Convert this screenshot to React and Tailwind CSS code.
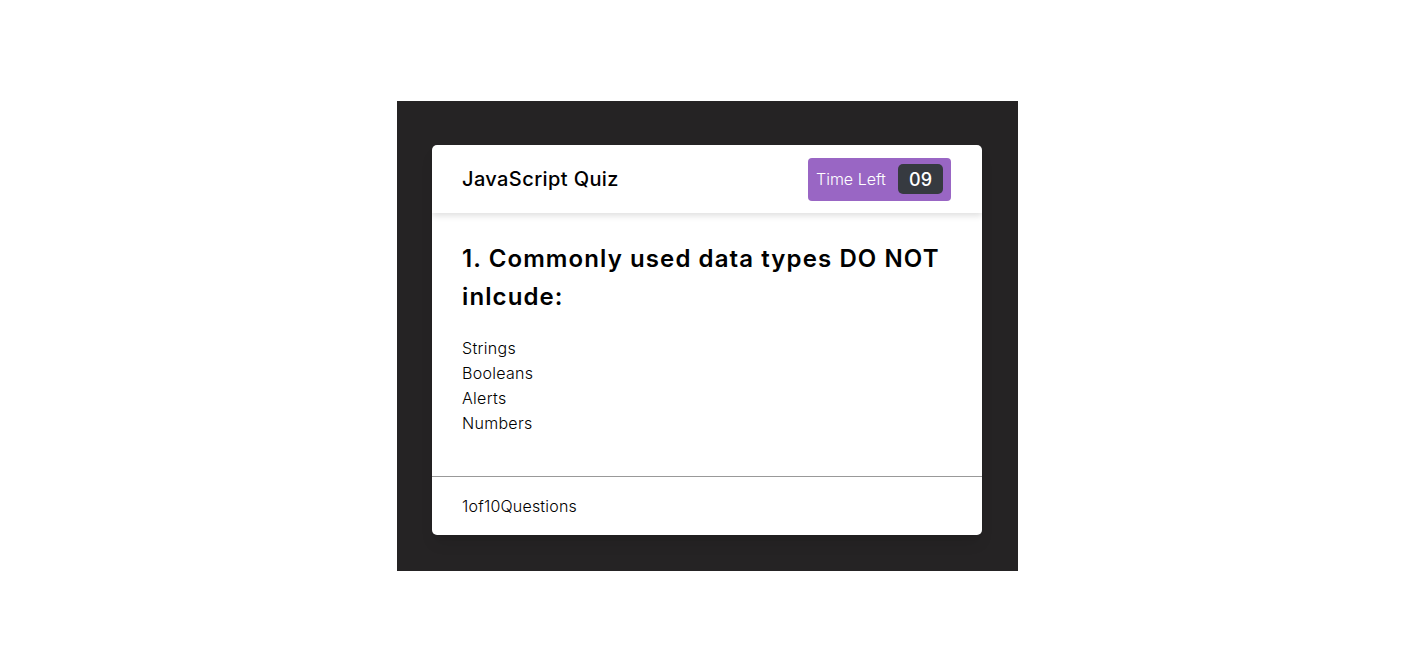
import React from "react";

const options = ["Strings", "Booleans", "Alerts", "Numbers"];

export default function App() {
  return (
    <div
      className="min-h-screen bg-white flex justify-center pt-[101px] pr-[1px]"
      style={{ fontFamily: "Inter, 'Noto Sans', sans-serif" }}
    >
      <div className="w-[621px] h-[470px] bg-[#252324] pt-[44px] px-[35px]">
        {/* Quiz card */}
        <div className="w-[550px] bg-white rounded-[5px] shadow-lg overflow-hidden">
          <header className="h-[68px] pl-[30px] pr-[31px] flex items-center justify-between shadow-[0_3px_6px_rgba(0,0,0,0.12)] relative">
            <h1 className="text-[20px] font-medium tracking-[0.4px] text-black">JavaScript Quiz</h1>
            <div className="h-[43px] w-[143px] bg-[#9966c4] rounded-[4px] flex items-center justify-between pl-[8px] pr-[8px]">
              <span className="text-white text-[16px] font-light">Time Left</span>
              <span className="h-[30px] w-[45px] bg-[#363a40] rounded-[5px] text-white text-[18px] font-medium flex items-center justify-center">
                09
              </span>
            </div>
          </header>

          <section className="px-[30px] pt-[27px] pb-[40px] border-b border-[#999]">
            <h2 className="text-[24px] leading-[38px] font-semibold tracking-[1.1px] text-black">
              1. Commonly used data types DO NOT inlcude:
            </h2>
            <ul className="mt-[20px]">
              {options.map((o) => (
                <li key={o} className="text-[16px] leading-[25px] font-light tracking-[0.3px] text-black">
                  {o}
                </li>
              ))}
            </ul>
          </section>

          <footer className="h-[58px] px-[30px] flex items-center">
            <span className="text-[16px] font-light tracking-[0.2px] text-black">1of10Questions</span>
          </footer>
        </div>
      </div>
    </div>
  );
}
